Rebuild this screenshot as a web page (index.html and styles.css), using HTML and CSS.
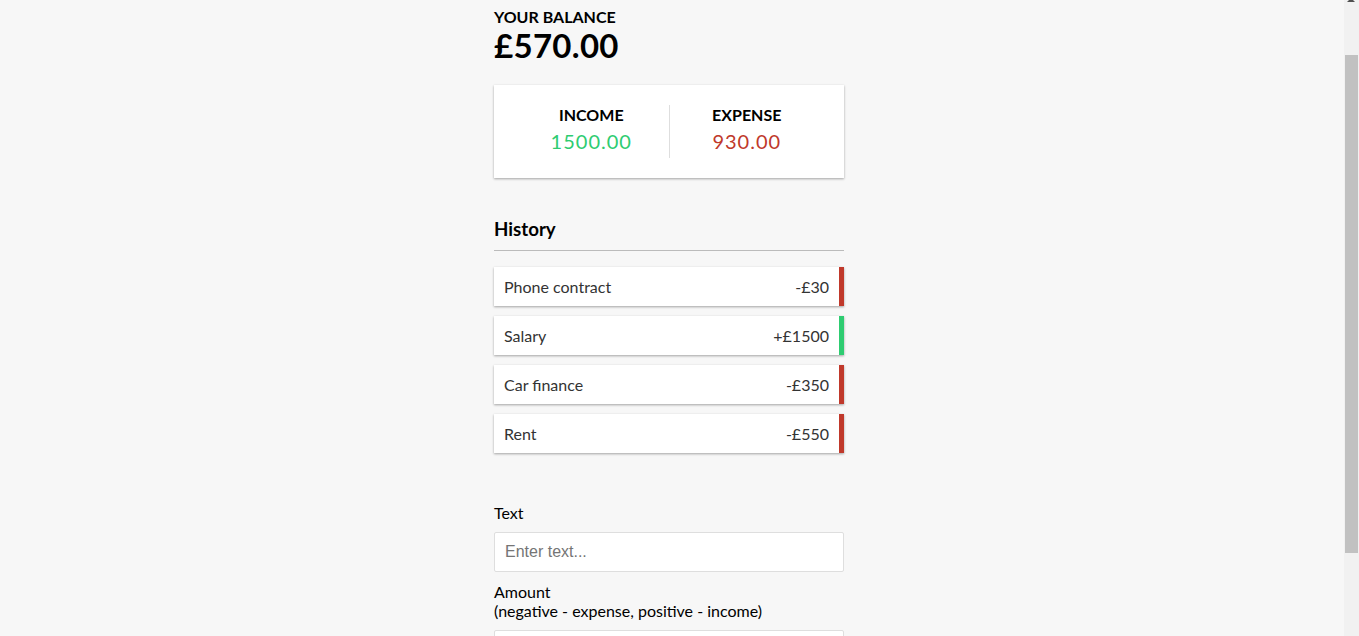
FILE: index.html
```html
<!DOCTYPE html>
<html lang="en">
<head>
<meta charset="utf-8">
<title>Expense Tracker</title>
<link rel="stylesheet" href="styles.css">
</head>
<body>
<div class="container">
  <h4 class="balance-title">Your Balance</h4>
  <h1 class="balance">£570.00</h1>

  <div class="inc-exp">
    <div class="inc-exp-col inc-exp-col-first">
      <h4 class="inc-exp-title">Income</h4>
      <p class="money money-plus">1500.00</p>
    </div>
    <div class="inc-exp-col">
      <h4 class="inc-exp-title">Expense</h4>
      <p class="money money-minus">930.00</p>
    </div>
  </div>

  <h3 class="history-title">History</h3>
  <ul class="list">
    <li class="list-item minus">Phone contract <span>-£30</span></li>
    <li class="list-item plus">Salary <span>+£1500</span></li>
    <li class="list-item minus">Car finance <span>-£350</span></li>
    <li class="list-item minus">Rent <span>-£550</span></li>
  </ul>

  <form class="form">
    <div class="form-control">
      <label class="label" for="text">Text</label>
      <input class="field" type="text" id="text" placeholder="Enter text...">
    </div>
    <div class="form-control">
      <label class="label" for="amount">Amount <br>(negative - expense, positive - income)</label>
      <input class="field" type="number" id="amount" placeholder="Enter amount...">
    </div>
    <button class="btn" type="button">Add transaction</button>
  </form>
</div>

<div class="scrollbar" aria-hidden="true">
  <div class="scrollbar-arrow"></div>
  <div class="scrollbar-thumb"></div>
</div>
<script src="script.js"></script>
</body>
</html>
```

FILE: styles.css
```css
* {
  box-sizing: border-box;
}

html {
  scroll-behavior: auto;
}

body {
  background-color: #f7f7f7;
  margin: 0;
  padding: 56px 21px 0 0;
  font-family: "Lato", "Noto Sans", sans-serif;
  color: #000;
}

.container {
  width: 350px;
  margin: 0 auto;
}

.balance-title {
  margin: 0;
  font-size: 16px;
  line-height: 18px;
  text-transform: uppercase;
  font-weight: 700;
}

.balance {
  margin: 0;
  font-size: 33px;
  line-height: 39px;
  letter-spacing: 0.3px;
  font-weight: 700;
}

.inc-exp {
  background-color: #fff;
  box-shadow: 0 1px 3px rgba(0, 0, 0, 0.12), 0 1px 2px rgba(0, 0, 0, 0.24);
  padding: 20px;
  display: flex;
  justify-content: space-between;
  margin: 20px 0;
}

.inc-exp-col {
  flex: 1;
  text-align: center;
}

.inc-exp-col-first {
  border-right: 1px solid #dedede;
}

.inc-exp-title {
  margin: 0;
  font-size: 16px;
  text-transform: uppercase;
  font-weight: 700;
}

.money {
  font-size: 20px;
  letter-spacing: 1px;
  margin: 5px 0;
}

.money-plus {
  color: #2ecc71;
}

.money-minus {
  color: #c0392b;
}

.history-title {
  font-size: 18.72px;
  font-weight: 700;
  border-bottom: 1px solid #bbb;
  padding-bottom: 10px;
  margin: 40px 0 10px;
}

.list {
  list-style-type: none;
  padding: 0;
  margin: 16px 0 40px;
}

.list-item {
  background-color: #fff;
  box-shadow: 0 1px 3px rgba(0, 0, 0, 0.12), 0 1px 2px rgba(0, 0, 0, 0.24);
  color: #333;
  font-size: 16px;
  display: flex;
  justify-content: space-between;
  padding: 10px;
  margin: 10px 0;
}

.list-item.plus {
  border-right: 5px solid #2ecc71;
}

.list-item.minus {
  border-right: 5px solid #c0392b;
}

.form {
  margin: 0;
}

.label {
  display: inline-block;
  margin: 10px 0;
  font-size: 16px;
}

.field {
  border: 1px solid #dedede;
  border-radius: 2px;
  display: block;
  font-family: "Liberation Sans", Arial, sans-serif;
  font-size: 16px;
  line-height: 18px;
  padding: 10px;
  width: 100%;
  background: #fff;
  color: #333;
}

.field::placeholder {
  color: #757575;
}

.btn {
  cursor: pointer;
  background-color: #9c88ff;
  box-shadow: 0 1px 3px rgba(0, 0, 0, 0.12), 0 1px 2px rgba(0, 0, 0, 0.24);
  color: #fff;
  border: 0;
  display: block;
  font-family: "Lato", sans-serif;
  font-size: 16px;
  margin: 10px 0 0;
  padding: 10px;
  width: 100%;
}

/* browser scrollbar as seen in the screenshot */
.scrollbar {
  position: fixed;
  top: 0;
  right: 0;
  width: 15px;
  height: 100vh;
  background: #f1f1f1;
}

.scrollbar-arrow {
  position: absolute;
  top: -2px;
  left: 3px;
  width: 0;
  height: 0;
  border-left: 4px solid transparent;
  border-right: 4px solid transparent;
  border-bottom: 4px solid #505050;
}

.scrollbar-thumb {
  position: absolute;
  top: 55px;
  left: 1px;
  width: 13px;
  height: 498px;
  background: #c1c1c1;
}
```

FILE: script.js
```js
window.scrollTo(0, 48);
window.addEventListener('load', function () {
  window.scrollTo(0, 48);
});
```
